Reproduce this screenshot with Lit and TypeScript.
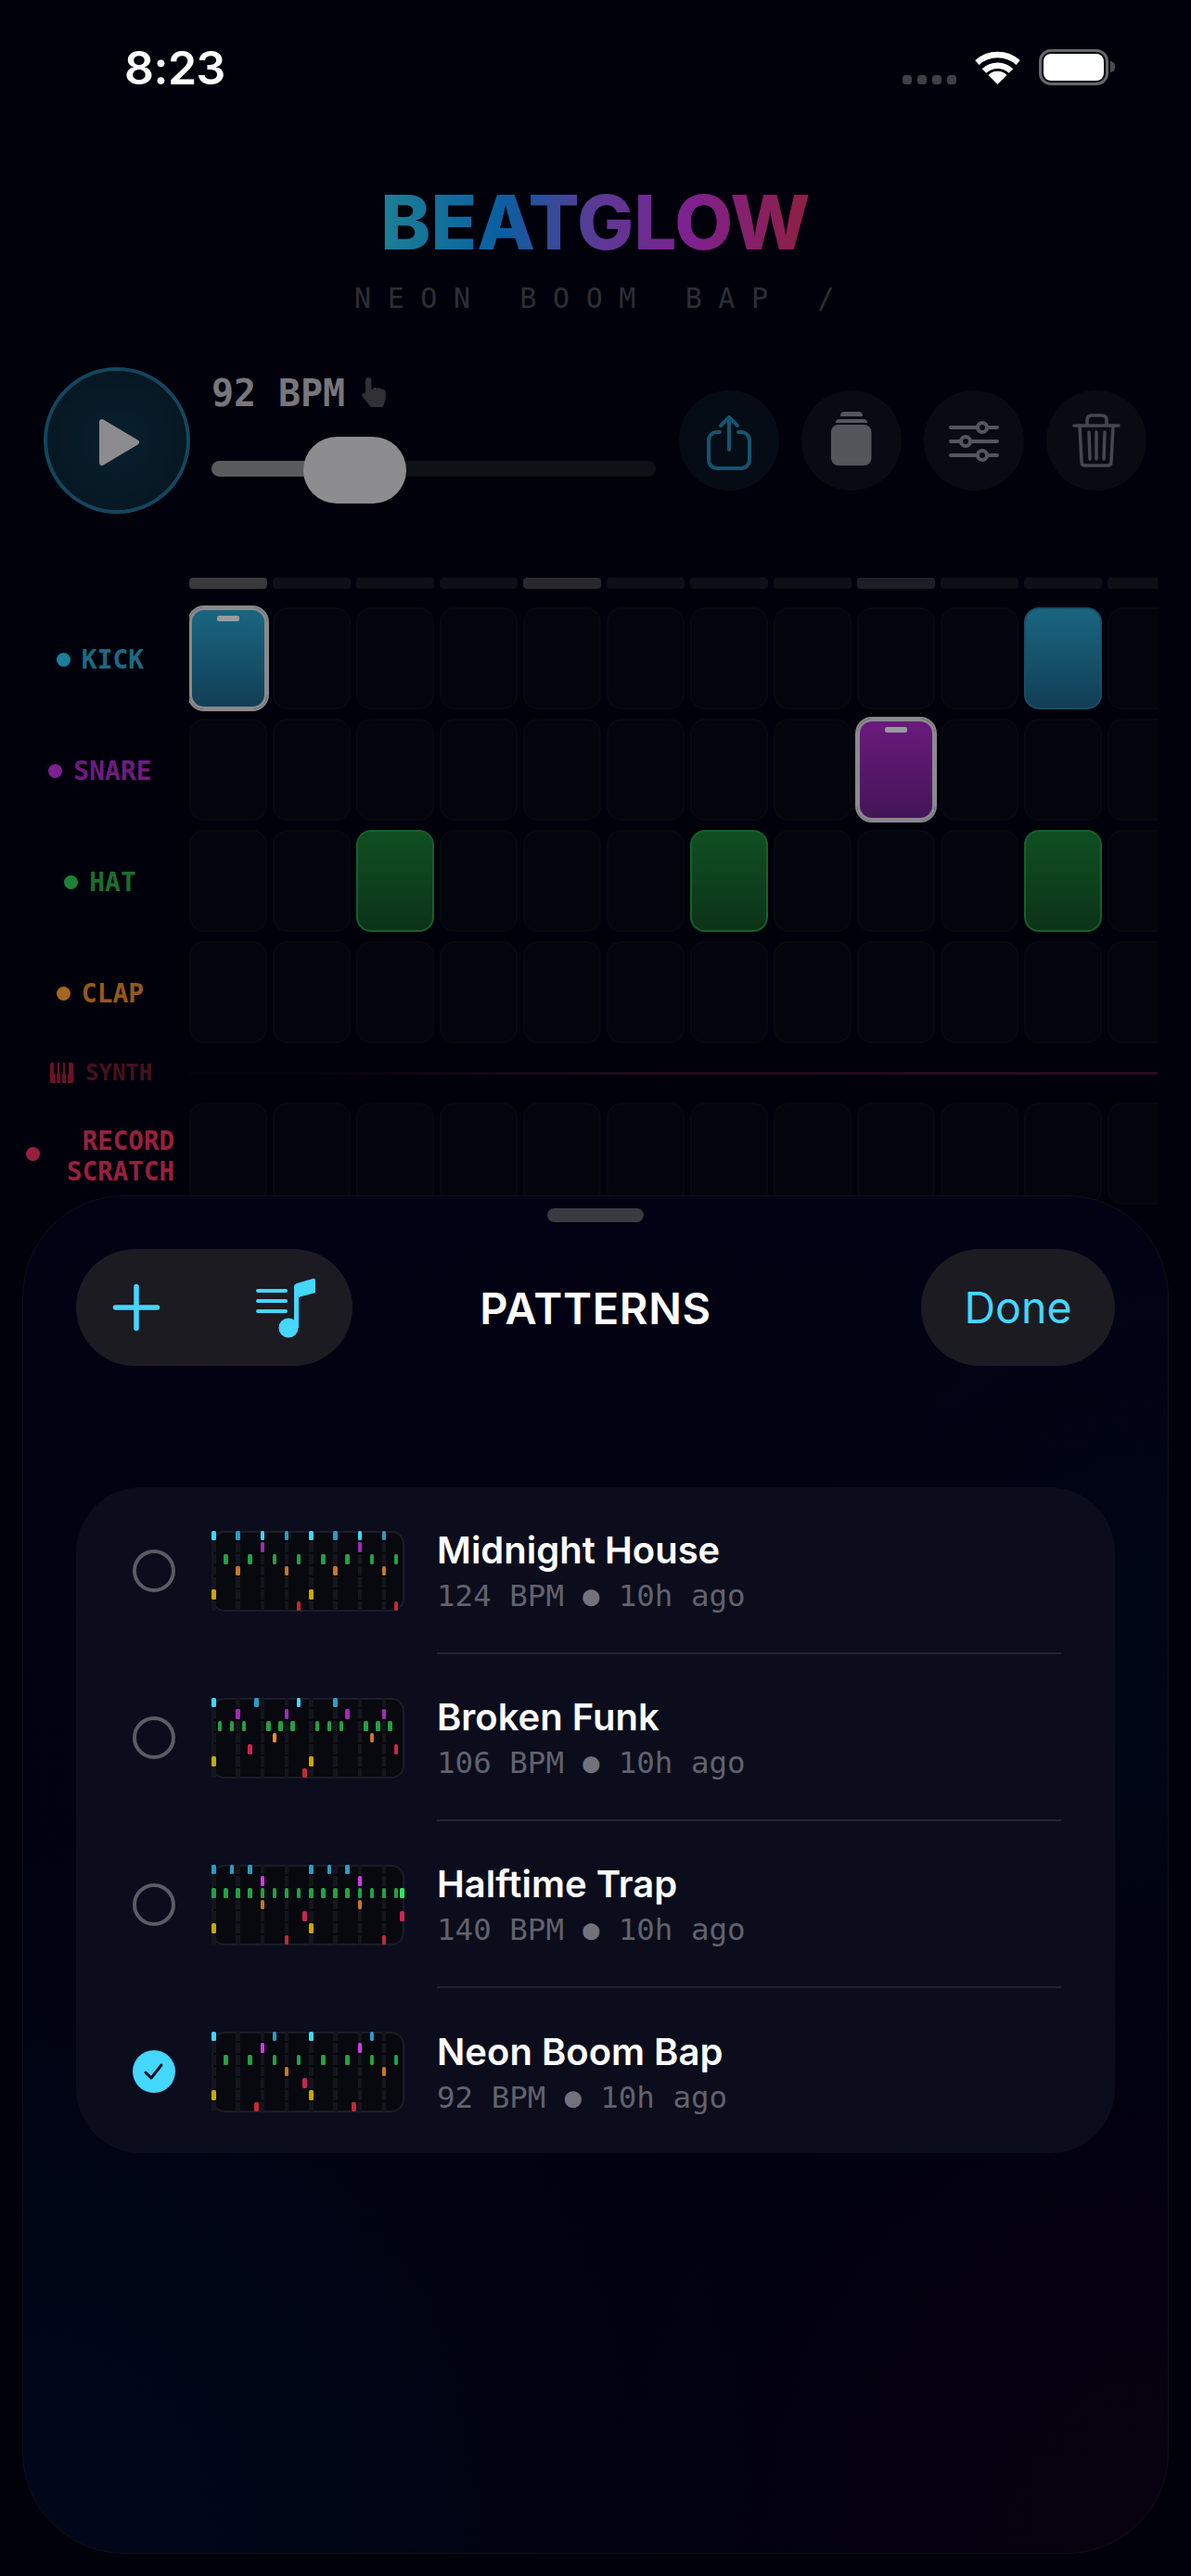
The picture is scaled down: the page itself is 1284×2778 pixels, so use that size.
import { LitElement, html, css } from "lit";
import { customElement } from "lit/decorators.js";

type Mark = [number, number, string];
const C = {
  kb: "#3fd6ff", kd: "#2a9cc4", s: "#a628b8", sb: "#d935ee", h: "#23a045", hb: "#2ee65f",
  c: "#c87528", cb: "#ff8c28", p: "#c9274f", y: "#c8a800", r: "#c22a35",
};
function marks(rows: [number[], string][][]): Mark[] {
  const out: Mark[] = [];
  rows.forEach((groups, r) => groups.forEach(([cols, col]) => cols.forEach((c) => out.push([c, r, col]))));
  return out;
}
const PATTERNS = [
  {
    name: "Midnight House", bpm: "124 BPM", ago: "10h ago", selected: false,
    marks: marks([
      [[[0, 8, 16, 24], C.kb], [[4, 12, 20, 28], C.kd]],
      [[[8, 24], C.s]],
      [[[2, 6, 10, 14, 18, 22, 26, 30], C.h]],
      [[[4, 12, 20, 28], C.c]],
      [],
      [[[0, 16], C.y]],
      [[[14, 30], C.r]],
    ]),
  },
  {
    name: "Broken Funk", bpm: "106 BPM", ago: "10h ago", selected: false,
    marks: marks([
      [[[0, 14], C.kb], [[7, 20], C.kd]],
      [[[4, 12, 22, 28], C.s]],
      [[[1, 3, 5, 9, 11, 13, 17, 19, 21, 25, 27, 29], C.h]],
      [[[10], C.cb], [[26], C.c]],
      [[[6, 30], C.p]],
      [[[0, 16], C.y]],
      [[[15], C.r]],
    ]),
  },
  {
    name: "Halftime Trap", bpm: "140 BPM", ago: "10h ago", selected: false,
    marks: marks([
      [[[0, 3, 6, 16, 19, 22], C.kd]],
      [[[8, 24], C.sb]],
      [[[0, 2, 4, 6, 8, 10, 12, 14, 16, 18, 20, 22, 24, 26, 28, 30], C.h], [[31], C.hb]],
      [[[8, 24], C.c]],
      [[[15, 31], C.p]],
      [[[0, 16], C.y]],
      [[[12, 28], C.r]],
    ]),
  },
  {
    name: "Neon Boom Bap", bpm: "92 BPM", ago: "10h ago", selected: true,
    marks: marks([
      [[[0, 16], C.kb], [[10, 26], C.kd]],
      [[[8, 24], C.sb]],
      [[[2, 6, 10, 14, 18, 22, 26, 30], C.h]],
      [[[12, 28], C.c]],
      [[[15], C.p]],
      [[[0, 16], C.y]],
      [[[7, 23], C.r]],
    ]),
  },
];
const TRACKS = [
  { name: "KICK", cls: "kick", on: [0, 10], sel: [0] },
  { name: "SNARE", cls: "snare", on: [8], sel: [8] },
  { name: "HAT", cls: "hat", on: [2, 6, 10], sel: [] as number[] },
  { name: "CLAP", cls: "clap", on: [] as number[], sel: [] as number[] },
];
const STEPS = Array.from({ length: 12 }, (_, i) => i);
const GUIDE_COLS = [0, 4, 8, 12, 16, 20, 24, 28];
const GUIDE_ROWS = [0, 1, 2, 3, 4, 5, 6];

@customElement("app-root")
export class AppRoot extends LitElement {
  static styles = css`
    :host { display: block; width: 1284px; height: 2778px; position: relative; overflow: hidden;
      background: #01010b; font-family: Inter, "Liberation Sans", sans-serif; color: #fff; }
    svg { display: block; overflow: visible; }
    .status { height: 144px; box-sizing: border-box; display: flex; align-items: center; padding: 2px 82px 0 134px; justify-content: space-between; }
    .time { font-size: 50px; font-weight: 600; line-height: 60px; letter-spacing: -0.5px; }
    .sys { display: flex; align-items: center; gap: 19px; margin-top: -2px; }
    .dots { display: flex; gap: 6px; align-self: flex-end; padding-bottom: 1px; }
    .dots i { width: 10px; height: 10px; border-radius: 3.5px; background: #3f3f46; }
    .batt { display: flex; align-items: center; gap: 2px; }
    .batt-body { width: 75px; height: 39px; box-sizing: border-box; border: 3.5px solid #66666d; border-radius: 13px; padding: 2px; }
    .batt-fill { width: 100%; height: 100%; background: #fff; border-radius: 8px; }
    .batt-cap { width: 5px; height: 12px; background: #4c4c52; border-radius: 0 6px 6px 0; }
    .title { margin-top: 54px; text-align: center; height: 84px; line-height: 84px; font-size: 81.5px; font-weight: 800; }
    .title span { background: linear-gradient(90deg, #1c8096 0%, #0a5fa0 28%, #5a3a95 50%, #7f2190 72%, #8e1f40 100%);
      -webkit-background-clip: text; background-clip: text; color: transparent; }
    .sub { margin-top: 22px; height: 36px; line-height: 36px; text-align: center; padding-left: 15px;
      font-family: "DejaVu Sans Mono", monospace; font-size: 30px; letter-spacing: 17.6px; color: #2e2e35; white-space: pre; }
    .controls { margin-top: 56px; height: 158px; display: flex; padding-left: 47px; }
    .play { width: 158px; height: 158px; box-sizing: border-box; border-radius: 50%; border: 4px solid #12475f;
      background: radial-gradient(circle, #08202d 0%, #06141e 100%); display: flex; align-items: center; justify-content: center; flex: none; }
    .tempo { width: 479px; margin-left: 23px; padding-top: 4px; flex: none; }
    .bpm { display: flex; align-items: center; gap: 16px; height: 48px; font-family: "DejaVu Sans Mono", monospace;
      font-size: 40px; font-weight: 700; color: #77777c; letter-spacing: -0.1px; }
    .slider { position: relative; height: 72px; margin-top: 23px; display: flex; align-items: center; }
    .track { width: 100%; height: 17px; border-radius: 9px; background: #101116; overflow: hidden; margin-top: -3px; }
    .track i { display: block; width: 110px; height: 100%; background: #5a5a5e; }
    .thumb { position: absolute; left: 99px; top: 0; width: 111px; height: 72px; border-radius: 36px; background: #8d8d8f; }
    .actions { display: flex; gap: 24px; margin-left: 25px; align-items: center; }
    .act { width: 108px; height: 108px; border-radius: 50%; background: #0a0b12; }
    .act.share { background: #050c15; }
    .grid { margin-top: 69px; }
    .beats { display: flex; gap: 6px; margin-left: 204px; width: 1044px; overflow: hidden; margin-bottom: 20px; }
    .beats i { flex: none; width: 84px; height: 12px; border-radius: 4px; background: #0f1016; }
    .beats i.b0 { background: #38383d; }
    .beats i.b1 { background: #28282e; }
    .beats i.b2 { background: #1e1f26; }
    .row { display: flex; height: 110px; margin-bottom: 10px; }
    .label { width: 204px; flex: none; display: flex; align-items: center; justify-content: center; gap: 12px;
      font-family: "DejaVu Sans Mono", monospace; font-weight: 700; font-size: 28px; padding: 2px 0 0 12px; box-sizing: border-box; }
    .dot { width: 15px; height: 15px; border-radius: 50%; background: currentColor; flex: none; box-shadow: 0 0 10px rgba(120, 120, 120, 0.15); }
    .kick { color: #1d7d9c; } .snare { color: #7d2091; } .hat { color: #1d8035; } .clap { color: #a8651f; } .rec { color: #98203f; }
    .kick .txt { color: #1b6a85; } .snare .txt { color: #6f1c80; } .hat .txt { color: #1b6f2f; } .clap .txt { color: #96581c; }
    .cells { display: flex; gap: 6px; width: 1044px; overflow-x: clip; overflow-y: visible; }
    .cell { flex: none; width: 84px; height: 110px; box-sizing: border-box; border-radius: 16px; position: relative;
      background: #03040c; border: 2px solid #080910; }
    .cell.kick { background: linear-gradient(180deg, #1a6680, #123e56); border-color: #174f66; }
    .cell.snare { background: linear-gradient(180deg, #6a1b7c, #431558); border-color: #5a1a6c; }
    .cell.hat { background: linear-gradient(180deg, #104f22, #0c3318); border-color: #15602b; }
    .cell.sel { border: 3px solid #8a8a8e; box-shadow: 0 0 0 2px #8a8a8e; }
    .notch { position: absolute; top: 6px; left: 50%; margin-left: -12px; width: 24px; height: 6px; border-radius: 2px; background: #9a9a9e; }
    .synth { display: flex; height: 44px; margin-bottom: 10px; align-items: center; }
    .synth .lbl { width: 204px; flex: none; display: flex; align-items: center; padding-left: 54px; box-sizing: border-box; gap: 13px;
      font-family: "DejaVu Sans Mono", monospace; font-weight: 700; font-size: 24px; color: #47111f; }
    .synth .line { width: 1044px; height: 3px; background: linear-gradient(90deg, #03030e 10%, #1f0a1e 45%, #2a0a20 100%); }
    .rec-label { width: 204px; flex: none; display: flex; align-items: center; padding-left: 28px; box-sizing: border-box; gap: 29px;
      font-family: "DejaVu Sans Mono", monospace; font-weight: 700; font-size: 27.5px; line-height: 33px; }
    .rec-label .txt { text-align: right; width: 116px; flex: none; margin-top: 5px; }
    .sheet { position: absolute; left: 24px; top: 1289px; width: 1236px; height: 1465px; box-sizing: border-box; border-radius: 110px;
      border: 1px solid #10101a;
      background:
        radial-gradient(800px 900px at 0% 100%, #00081a 0%, transparent 100%),
        radial-gradient(600px 650px at 100% 100%, #090110 0%, transparent 100%),
        radial-gradient(450px 500px at 100% 35%, #000616 0%, transparent 100%),
        linear-gradient(180deg, #020214 0%, #01010f 50%);
      padding: 13px 57px 0; }
    .grab { width: 104px; height: 15px; margin: 0 auto; border-radius: 8px; background: #3a3a40; }
    .bar { margin-top: 29px; display: grid; grid-template-columns: 1fr auto 1fr; align-items: center; }
    .pill { height: 126px; border-radius: 63px; background: #1c1b22; }
    .tools { width: 298px; position: relative; }
    .done { justify-self: end; width: 209px; display: flex; align-items: center; justify-content: center; color: #44d7ff; font-size: 46.5px; font-weight: 400; }
    .bar h2 { margin: 0; font-size: 47px; font-weight: 600; letter-spacing: 0.7px; }
    .card { margin-top: 131px; height: 718px; border-radius: 70px; background: #0b0d1c; }
    .pt { display: flex; height: 180px; align-items: center; }
    .radio { margin-left: 61px; width: 46px; height: 46px; box-sizing: border-box; border: 4px solid #5b5b64; border-radius: 50%; flex: none; }
    .radio.on { border: none; background: #44d7ff; display: flex; align-items: center; justify-content: center; }
    .thumbn { margin-left: 39px; flex: none; width: 208px; height: 87px; border-radius: 14px; background: #08080f;
      box-shadow: inset 0 0 0 2px #1c1c29; display: grid; grid-template-columns: repeat(32, 4.6px); column-gap: 1.97px;
      grid-template-rows: repeat(7, 10.7px); row-gap: 2px; }
    .thumbn i { border-radius: 1.5px; }
    .thumbn i.g { background: #15151d; border-radius: 0; }
    .info { margin-left: 35px; margin-right: 58px; flex: 1; height: 100%; box-sizing: border-box; display: flex; flex-direction: column;
      justify-content: center; border-bottom: 2px solid #23242f; padding-top: 2px; }
    .pt:last-child .info { border-bottom: none; }
    .nm { font-size: 40px; font-weight: 600; line-height: 48px; }
    .mt { font-family: "DejaVu Sans Mono", monospace; font-size: 32.5px; line-height: 40px; color: #62626d; margin-top: 5px; white-space: pre; }
    .mt b { display: inline-block; width: 19.570px; text-align: center; font-weight: 400; font-size: 30px; line-height: 20px; vertical-align: 1px; color: #72727d; }
  `;

  private thumb(ms: Mark[]) {
    return html`<div class="thumbn">
      ${GUIDE_COLS.map((c) => GUIDE_ROWS.map((r) => html`<i class="g" style="grid-column:${c + 1};grid-row:${r + 1}"></i>`))}
      ${ms.map(([c, r, col]) => html`<i style="grid-column:${c + 1};grid-row:${r + 1};background:${col}"></i>`)}
    </div>`;
  }

  private cells(t?: { cls: string; on: number[]; sel: number[] }) {
    return html`<div class="cells">
      ${STEPS.map((i) => {
        const on = t && t.on.includes(i);
        const sel = t && t.sel.includes(i);
        return html`<div class="cell ${on ? t!.cls : ""} ${sel ? "sel" : ""}">${sel ? html`<div class="notch"></div>` : ""}</div>`;
      })}
    </div>`;
  }

  render() {
    return html`
      <div class="status">
        <div class="time">8:23</div>
        <div class="sys">
          <div class="dots"><i></i><i></i><i></i><i></i></div>
          <svg width="51" height="38" viewBox="0 0 51 38" fill="none" stroke="#fff" stroke-width="6.5">
            <path d="M3.4 14.5 A33 33 0 0 1 47.6 14.5" />
            <path d="M11 23.5 A21 21 0 0 1 40 23.5" />
            <path d="M25.5 38 L15.5 28 A14 14 0 0 1 35.5 28 Z" fill="#fff" stroke="none" />
          </svg>
          <div class="batt">
            <div class="batt-body"><div class="batt-fill"></div></div>
            <div class="batt-cap"></div>
          </div>
        </div>
      </div>
      <div class="title"><span>BEATGLOW</span></div>
      <div class="sub">NEON BOOM BAP /</div>
      <div class="controls">
        <div class="play">
          <svg width="60" height="66" viewBox="0 0 60 66"><path d="M14 13 L51 35 L14 57 Z" fill="#8c8c8e" stroke="#8c8c8e" stroke-width="6" stroke-linejoin="round" /></svg>
        </div>
        <div class="tempo">
          <div class="bpm">92 BPM
            <svg width="30" height="32" viewBox="0 0 30 32" fill="#303035"><path d="M6 2.5a3.2 3.2 0 0 1 6.4 0V12l1.6-.6c.5-1.800 3.400-1.800 4.300-.3 1-1.300 3.700-1 4.500.7 1.500-.7 4.200.2 4.700 2.200.6 3 .5 7.500-.5 11L25 31H12L3 20c-2-2.500.5-5 3-3.500z"/></svg>
          </div>
          <div class="slider">
            <div class="track"><i></i></div>
            <div class="thumb"></div>
          </div>
        </div>
        <div class="actions">
          <div class="act share">
            <svg width="108" height="108" viewBox="0 0 108 108" fill="none" stroke="#15546e" stroke-width="4" stroke-linecap="round" stroke-linejoin="round">
              <path d="M44 45H41a9 9 0 0 0-9 9v21a9 9 0 0 0 9 9h26a9 9 0 0 0 9-9V54a9 9 0 0 0-9-9h-3" />
              <path d="M54 64V29M45 38l9-9 9 9" />
            </svg>
          </div>
          <div class="act">
            <svg width="108" height="108" viewBox="0 0 108 108" fill="#55555c">
              <rect x="32" y="37" width="43.500" height="44" rx="8" />
              <path d="M42 28q0-5 4-5h16q4 0 4 5z" />
              <path d="M37 35q0-4 4-4h26q4 0 4 4z" />
            </svg>
          </div>
          <div class="act">
            <svg width="108" height="108" viewBox="0 0 108 108" fill="none" stroke="#55555c" stroke-width="4" stroke-linecap="round">
              <path d="M29 40H79M29 55H79M29 70H79" />
              <g fill="#0a0b12"><circle cx="63" cy="40" r="5" /><circle cx="45" cy="55" r="5" /><circle cx="63" cy="70" r="5" /></g>
            </svg>
          </div>
          <div class="act">
            <svg width="108" height="108" viewBox="0 0 108 108" fill="none" stroke="#46464e" stroke-width="3.500" stroke-linecap="round" stroke-linejoin="round">
              <path d="M30 38H78M44 38V32q0-5 5-5h11q5 0 5 5v6" />
              <path d="M36 38l2 39q0 4 4 4h24q4 0 4-4l2-39" />
              <path d="M46 45l1 29M54 45v29M63 45l-1 29" />
            </svg>
          </div>
        </div>
      </div>
      <div class="grid">
        <div class="beats">
          ${STEPS.map((i) => html`<i class="${i === 0 ? "b0" : i === 4 ? "b1" : i === 8 ? "b2" : ""}"></i>`)}
        </div>
        ${TRACKS.map((t) => html`
          <div class="row">
            <div class="label ${t.cls}"><span class="dot"></span><span class="txt">${t.name}</span></div>
            ${this.cells(t)}
          </div>`)}
        <div class="synth">
          <div class="lbl">
            <svg width="25" height="22" viewBox="0 0 25 22" fill="#6a1226">
              <path d="M0 2q0-2 2-2h2v12h2v10H2q-2 0-2-2zM8 0h2v12h1v10H7V12h1zM13 22V12h1V0h2v12h1v10zM19 22V12h1V0h3q2 0 2 2v18q0 2-2 2z" />
            </svg>
            <span>SYNTH</span>
          </div>
          <div class="line"></div>
        </div>
        <div class="row">
          <div class="rec-label rec"><span class="dot"></span><span class="txt">RECORD<br />SCRATCH</span></div>
          ${this.cells()}
        </div>
      </div>
      <div class="sheet">
        <div class="grab"></div>
        <div class="bar">
          <div class="pill tools">
            <svg width="298" height="126" viewBox="0 0 298 126" fill="none" stroke="#44d7ff" stroke-linecap="round">
              <path d="M65 40.500V85.500M42.500 63H87.500" stroke-width="5.500" />
              <path d="M196 45H226M196 56H226M196 67H226" stroke-width="4" />
              <path d="M235 41q0-3 3-4l17-5q3-1 3 2V47L240 52V85H235z" fill="#44d7ff" stroke="none" />
              <circle cx="229" cy="85" r="10.500" fill="#44d7ff" stroke="none" />
            </svg>
          </div>
          <h2>PATTERNS</h2>
          <div class="pill done">Done</div>
        </div>
        <div class="card">
          ${PATTERNS.map((p) => html`
            <div class="pt">
              ${p.selected
                ? html`<div class="radio on"><svg width="24" height="20" viewBox="0 0 24 20" fill="none" stroke="#07101c" stroke-width="3" stroke-linecap="round" stroke-linejoin="round"><path d="M3 11l6 6L20 3" /></svg></div>`
                : html`<div class="radio"></div>`}
              ${this.thumb(p.marks)}
              <div class="info">
                <div class="nm">${p.name}</div>
                <div class="mt">${p.bpm} <b>●</b> ${p.ago}</div>
              </div>
            </div>`)}
        </div>
      </div>
    `;
  }
}
